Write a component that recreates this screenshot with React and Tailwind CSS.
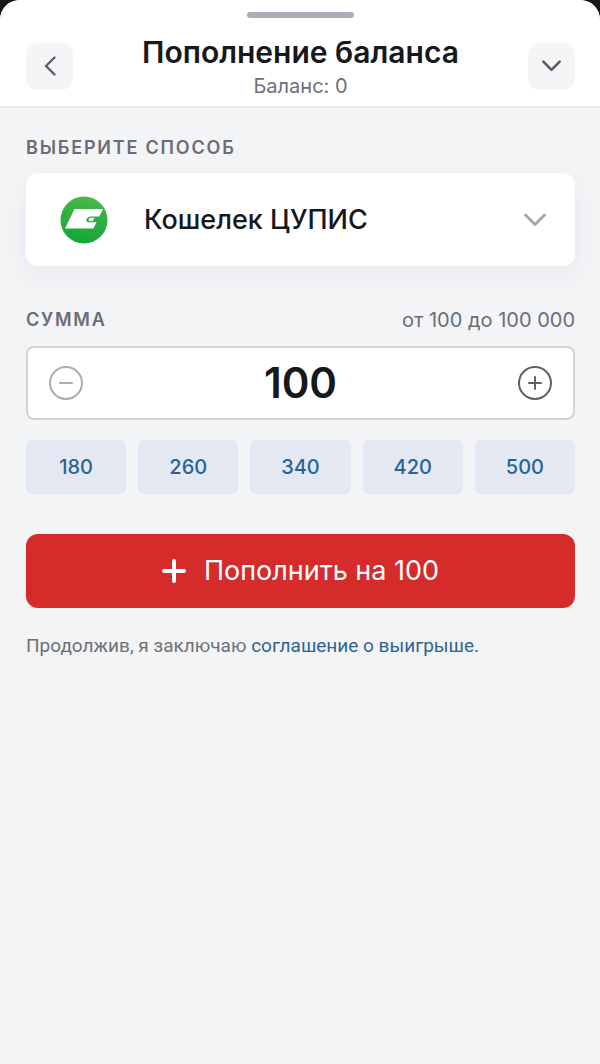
import React, { useState } from 'react';

const MIN_AMOUNT = 100;
const MAX_AMOUNT = 100000;
const STEP = 10;
const PRESETS = [180, 260, 340, 420, 500];

const Chevron = ({ className }) => (
  <svg viewBox="0 0 24 14" fill="none" className={className} aria-hidden="true">
    <path
      d="M2.5 2L12 11.5L21.5 2"
      stroke="currentColor"
      strokeWidth="3"
      strokeLinecap="round"
      strokeLinejoin="round"
    />
  </svg>
);

const WalletLogo = () => (
  <svg viewBox="0 0 48 48" className="h-12 w-12 shrink-0" aria-hidden="true">
    <defs>
      <linearGradient id="wallet-green" x1="0.6" y1="0" x2="0.4" y2="1">
        <stop offset="0" stopColor="#4cb748" />
        <stop offset="1" stopColor="#12a53b" />
      </linearGradient>
    </defs>
    <circle cx="24" cy="24" r="23.5" fill="url(#wallet-green)" />
    <path
      d="M14.5 13H43L39.2 20.6H31.5C28.5 20.6 26.3 22.4 26.3 24.2C26.3 25.6 27.4 26.2 29.2 26.2H36.4L33.4 32.4H5Z"
      fill="#fff"
    />
    <path d="M31 21.8H34.4L32.8 25H29.8C27.8 25 28.6 21.8 31 21.8Z" fill="#fff" />
  </svg>
);

const Header = () => (
  <header className="rounded-t-[20px] border-b-2 border-[#e9eaec] bg-white pt-3 pr-[25px] pb-2 pl-[26px]">
    <div className="mx-auto h-[6px] w-[107px] rounded-full bg-[#adacb8]" />
    <div className="mt-4 flex items-center justify-between">
      <button
        type="button"
        aria-label="Назад"
        className="flex h-[47px] w-[47px] items-center justify-center rounded-xl bg-[#f4f5f7] text-[#5b5e66]"
      >
        <svg viewBox="0 0 12 20" fill="none" className="h-5 w-3">
          <path d="M10.5 1.5L2 10L10.5 18.5" stroke="currentColor" strokeWidth="2.4" strokeLinecap="round" strokeLinejoin="round" />
        </svg>
      </button>
      <div className="text-center">
        <h1 className="text-[30px] leading-9 font-semibold text-[#17181b]">Пополнение баланса</h1>
        <p className="mt-1 text-[20px] leading-6 text-[#6d7078]">Баланс: 0</p>
      </div>
      <button
        type="button"
        aria-label="Свернуть"
        className="flex h-[47px] w-[47px] items-center justify-center rounded-xl bg-[#f4f5f7] text-[#5b5e66]"
      >
        <Chevron className="h-3 w-[21px]" />
      </button>
    </div>
  </header>
);

const App = () => {
  const [amount, setAmount] = useState(MIN_AMOUNT);

  const changeAmount = (value) => {
    setAmount(Math.min(MAX_AMOUNT, Math.max(MIN_AMOUNT, value)));
  };

  const handleInput = (e) => {
    const digits = e.target.value.replace(/\D/g, '');
    setAmount(Math.min(MAX_AMOUNT, Number(digits)));
  };

  return (
    <div className="min-h-screen bg-[#17171a] font-[Inter,'Liberation_Sans',sans-serif]">
      <div className="min-h-screen rounded-t-[20px] bg-[#f3f4f6]">
        <Header />

        <main className="pt-6 pr-[25px] pl-[26px]">
          <label htmlFor="method" className="block text-[18px] leading-8 font-semibold tracking-widest text-[#6a6d77] uppercase">
            Выберите способ
          </label>
          <div className="mt-[9px] flex h-[93px] items-center rounded-xl bg-white pr-7 pl-[34px] shadow-[0_10px_24px_rgba(40,40,90,0.05)]">
            <WalletLogo />
            <select
              id="method"
              className="ml-9 min-w-0 flex-1 appearance-none bg-transparent text-[27px] leading-9 font-medium text-[#17181b] outline-none"
            >
              <option>Кошелек ЦУПИС</option>
            </select>
            <Chevron className="pointer-events-none h-[14px] w-6 text-[#a7a9ae]" />
          </div>

          <div className="mt-[38px] flex items-center justify-between text-[#6a6d77]">
            <label htmlFor="amount" className="text-[18px] leading-8 font-semibold tracking-widest uppercase">
              Сумма
            </label>
            <span className="text-[20px] leading-8">от 100 до 100 000</span>
          </div>
          <div className="mt-[10px] flex h-[74px] items-center rounded-lg border-2 border-[#d2d3d6] bg-white px-5">
            <button
              type="button"
              aria-label="Уменьшить"
              onClick={() => changeAmount(amount - STEP)}
              className={amount <= MIN_AMOUNT ? 'text-[#adadb0]' : 'text-[#5f6168]'}
            >
              <svg viewBox="0 0 36 36" fill="none" stroke="currentColor" strokeWidth="2" strokeLinecap="round" className="h-9 w-9">
                <circle cx="18" cy="18" r="16" />
                <path d="M12 18H24" />
              </svg>
            </button>
            <input
              id="amount"
              type="text"
              inputMode="numeric"
              value={amount}
              onChange={handleInput}
              className="min-w-0 flex-1 bg-transparent text-center text-[42px] leading-12 font-semibold text-[#17181b] outline-none"
            />
            <button
              type="button"
              aria-label="Увеличить"
              onClick={() => changeAmount(amount + STEP)}
              className="text-[#5f6168]"
            >
              <svg viewBox="0 0 36 36" fill="none" stroke="currentColor" strokeWidth="2" strokeLinecap="round" className="h-9 w-9">
                <circle cx="18" cy="18" r="16" />
                <path d="M12 18H24M18 12V24" />
              </svg>
            </button>
          </div>

          <div className="mt-5 grid grid-cols-5 gap-3">
            {PRESETS.map((preset) => (
              <button
                key={preset}
                type="button"
                onClick={() => changeAmount(preset)}
                className="h-[54px] rounded-md bg-[#e3e8f3] text-[20px] font-medium text-[#2a6496]"
              >
                {preset}
              </button>
            ))}
          </div>

          <button
            type="button"
            className="mt-10 flex h-[74px] w-full items-center justify-center gap-[18px] rounded-xl bg-[#d52b2a] text-[27px] text-white"
          >
            <svg viewBox="0 0 24 24" fill="none" className="h-6 w-6" aria-hidden="true">
              <path d="M12 2V22M2 12H22" stroke="currentColor" strokeWidth="4" strokeLinecap="round" />
            </svg>
            Пополнить на {amount}
          </button>

          <p className="mt-6 font-[Roboto,Inter,sans-serif] text-[19px] leading-7 text-[#6d7078]">
            Продолжив, я заключаю{' '}
            <a href="#agreement" className="text-[#2f6390]">соглашение о выигрыше.</a>
          </p>
        </main>
      </div>
    </div>
  );
};

export default App;
